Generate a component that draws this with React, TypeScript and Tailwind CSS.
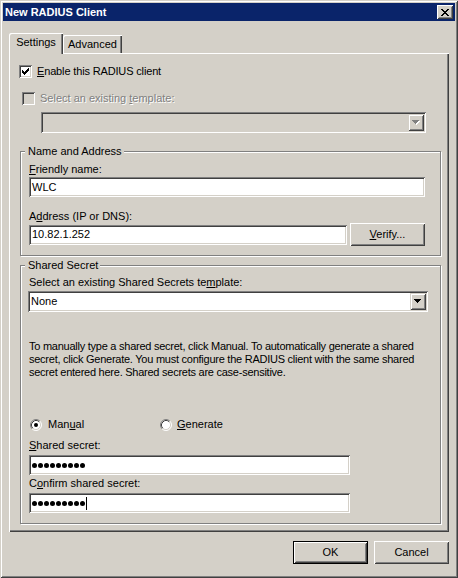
import React from "react";

// classic 3D bevels
const sunken = "shadow-[inset_1px_1px_0_#808080,inset_-1px_-1px_0_#ffffff,inset_2px_2px_0_#404040,inset_-2px_-2px_0_#d4d0c8]";
const raisedBtn = "shadow-[inset_1px_1px_0_#ffffff,inset_-1px_-1px_0_#404040,inset_2px_2px_0_#d4d0c8,inset_-2px_-2px_0_#808080]";
const raisedEdge = "shadow-[inset_1px_1px_0_#d4d0c8,inset_-1px_-1px_0_#404040,inset_2px_2px_0_#ffffff,inset_-2px_-2px_0_#808080]";
const disabledText = "text-[#808080] [text-shadow:1px_1px_0_#ffffff]";

const Check = ({ checked, disabled }: { checked?: boolean; disabled?: boolean }) => (
    <div className={`w-[13px] h-[13px] shrink-0 p-[2px] ${sunken} ${disabled ? "bg-[#d4d0c8]" : "bg-white"}`}>
        {checked && (
            <svg width="9" height="9" viewBox="0 0 9 9" shapeRendering="crispEdges">
                <path
                    transform="translate(1 1)"
                    d="M6 0h1v1h-1z M5 1h2v1h-2z M0 2h1v1h-1z M4 2h3v1h-3z M0 3h2v1h-2z M3 3h3v1h-3z M0 4h5v1h-5z M1 5h3v1h-3z M2 6h1v1h-1z"
                    fill="#000"
                />
            </svg>
        )}
    </div>
);

const Radio = ({ checked }: { checked?: boolean }) => (
    <svg width="12" height="12" viewBox="0 0 12 12" className="shrink-0">
        <circle cx="6" cy="6" r="5" fill="#fff" />
        <path d="M2.11 9.89 A5.5 5.5 0 0 1 9.89 2.11" stroke="#808080" fill="none" />
        <path d="M9.89 2.11 A5.5 5.5 0 0 1 2.11 9.89" stroke="#ffffff" fill="none" />
        <path d="M2.82 9.18 A4.5 4.5 0 0 1 9.18 2.82" stroke="#404040" fill="none" />
        <path d="M9.18 2.82 A4.5 4.5 0 0 1 2.82 9.18" stroke="#d4d0c8" fill="none" />
        {checked && <circle cx="6" cy="6" r="2" fill="#000" />}
    </svg>
);

const Arrow = ({ disabled }: { disabled?: boolean }) => (
    <svg width="8" height="5" viewBox="0 0 8 5" shapeRendering="crispEdges">
        {disabled && <path transform="translate(1 1)" d="M0 0h7v1h-7z M1 1h5v1h-5z M2 2h3v1h-3z M3 3h1v1h-1z" fill="#fff" />}
        <path d="M0 0h7v1h-7z M1 1h5v1h-5z M2 2h3v1h-3z M3 3h1v1h-1z" fill={disabled ? "#808080" : "#000"} />
    </svg>
);

const Combo = ({ value, disabled, className }: { value?: string; disabled?: boolean; className: string }) => (
    <div className={`flex p-[2px] h-[21px] ${sunken} ${disabled ? "bg-[#d4d0c8]" : "bg-white"} ${className}`}>
        <div className="flex-1 pl-[1px] flex items-center">{value}</div>
        <div className={`w-[16px] h-full flex items-center justify-center bg-[#d4d0c8] ${raisedEdge}`}>
            <Arrow disabled={disabled} />
        </div>
    </div>
);

const Field = ({ className, children }: { className: string; children?: React.ReactNode }) => (
    <div className={`h-[20px] bg-white p-[2px] pl-[3px] flex items-center ${sunken} ${className}`}>{children}</div>
);

const Dots = ({ caret }: { caret?: boolean }) => (
    <div className="flex items-center gap-px">
        {Array.from({ length: 9 }).map((_, i) => (
            <span key={"dot-" + i} className="w-[5px] h-[5px] rounded-full bg-black" />
        ))}
        {caret && <span className="w-px h-[13px] bg-black" />}
    </div>
);

const Button = ({ label, isDefault, className = "" }: { label: React.ReactNode; isDefault?: boolean; className?: string }) => (
    <div className={`w-[75px] h-[23px] ${isDefault ? "border border-black" : ""} ${className}`}>
        <div className={`w-full h-full flex items-center justify-center bg-[#d4d0c8] ${raisedBtn}`}>{label}</div>
    </div>
);

const Group = ({ title, className, children }: { title: string; className: string; children: React.ReactNode }) => (
    <div className={`relative ml-[11px] w-[421px] border border-[#808080] shadow-[inset_1px_1px_0_#ffffff,1px_1px_0_#ffffff] ${className}`}>
        <span className="absolute top-[-7px] left-[4px] pl-[3px] pr-[2px] bg-[#d4d0c8] leading-[13px]">{title}</span>
        {children}
    </div>
);

const Label = ({ children, className = "" }: { children: React.ReactNode; className?: string }) => (
    <p className={`ml-[8px] h-[13px] leading-[13px] ${className}`}>{children}</p>
);

export default function App() {
    return (
        <div className={`w-[458px] h-[578px] p-[3px] bg-[#d4d0c8] flex flex-col text-[11px] leading-[13px] text-black [font-family:'Liberation_Sans',Arial,sans-serif] ${raisedEdge}`}>
            {/* title bar */}
            <div className="h-[18px] shrink-0 bg-[#0a246a] flex items-center justify-between pl-[2px] pr-[2px]">
                <p className="font-bold text-white">New RADIUS Client</p>
                <div className={`w-[16px] h-[14px] flex items-center justify-center bg-[#d4d0c8] ${raisedBtn}`}>
                    <svg width="8" height="7" viewBox="0 0 8 7" shapeRendering="crispEdges">
                        <path
                            d="M0 0h2v1h-2z M6 0h2v1h-2z M1 1h2v1h-2z M5 1h2v1h-2z M2 2h4v1h-4z M3 3h2v1h-2z M2 4h4v1h-4z M1 5h2v1h-2z M5 5h2v1h-2z M0 6h2v1h-2z M6 6h2v1h-2z"
                            fill="#000"
                        />
                    </svg>
                </div>
            </div>

            {/* tabs */}
            <div className="mt-[12px] ml-[6px] h-[20px] flex items-end">
                <div className="relative z-10 w-[54px] h-[21px] -mb-[1px] bg-[#d4d0c8] rounded-tl-[2px] flex items-center justify-center pb-[2px] shadow-[inset_1px_1px_0_#ffffff,inset_-1px_0_0_#404040,inset_-2px_0_0_#808080]">
                    Settings
                </div>
                <div className="w-[59px] h-[18px] bg-[#d4d0c8] rounded-tl-[2px] flex items-center justify-center shadow-[inset_1px_1px_0_#ffffff,inset_-1px_0_0_#404040,inset_-2px_0_0_#808080]">
                    Advanced
                </div>
            </div>

            {/* tab panel */}
            <div className="ml-[6px] w-[440px] h-[479px] flex flex-col shadow-[inset_1px_1px_0_#ffffff,inset_-1px_-1px_0_#404040,inset_-2px_-2px_0_#808080]">
                <div className="mt-[12px] ml-[10px] flex items-center gap-[5px] h-[13px]">
                    <Check checked />
                    <p className="tracking-[-0.15px]"><u>E</u>nable this RADIUS client</p>
                </div>
                <div className="mt-[14px] ml-[13px] flex items-center gap-[5px] h-[13px]">
                    <Check disabled />
                    <p className={disabledText}>Select an existing <u>t</u>emplate:</p>
                </div>
                <Combo disabled className="mt-[7px] ml-[32px] w-[385px]" />

                <Group title="Name and Address" className="mt-[18px] h-[105px]">
                    <Label className="mt-[11px]"><u>F</u>riendly name:</Label>
                    <Field className="mt-[1px] ml-[8px] w-[396px]">WLC</Field>
                    <Label className="mt-[13px]">A<u>d</u>dress (IP or DNS):</Label>
                    <div className="ml-[8px] h-[23px] flex items-center gap-[3px]">
                        <Field className="w-[318px]">10.82.1.252</Field>
                        <Button label={<span><u>V</u>erify...</span>} />
                    </div>
                </Group>

                <Group title="Shared Secret" className="mt-[9px] h-[259px]">
                    <Label className="mt-[10px]">Select an existing Shared Secrets te<u>m</u>plate:</Label>
                    <Combo value="None" className="mt-[2px] ml-[7px] w-[400px]" />
                    <div className="mt-[28px] ml-[8px] whitespace-nowrap tracking-[-0.25px]">
                        <p>To manually type a shared secret, click Manual. To automatically generate a shared</p>
                        <p>secret, click Generate. You must configure the RADIUS client with the same shared</p>
                        <p>secret entered here. Shared secrets are case-sensitive.</p>
                    </div>
                    <div className="mt-[39px] ml-[9px] h-[13px] flex items-center">
                        <div className="w-[130px] flex items-center gap-[6px]">
                            <Radio checked />
                            <p>Man<u>u</u>al</p>
                        </div>
                        <div className="flex items-center gap-[5px]">
                            <Radio />
                            <p><u>G</u>enerate</p>
                        </div>
                    </div>
                    <Label className="mt-[8px]"><u>S</u>hared secret:</Label>
                    <Field className="mt-[3px] ml-[8px] w-[321px]"><Dots /></Field>
                    <Label className="mt-[2px]">C<u>o</u>nfirm shared secret:</Label>
                    <Field className="mt-[3px] ml-[8px] w-[321px]"><Dots caret /></Field>
                </Group>
            </div>

            {/* buttons */}
            <div className="mt-[9px] pr-[6px] flex justify-end gap-[6px]">
                <Button label="OK" isDefault />
                <Button label="Cancel" />
            </div>
        </div>
    );
}
